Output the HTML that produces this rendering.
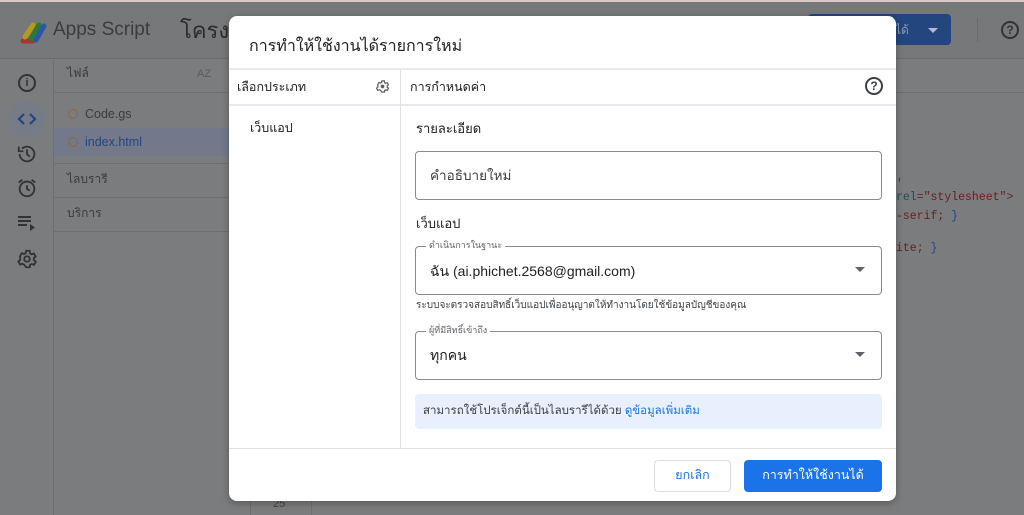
<!DOCTYPE html>
<html><head><meta charset="utf-8"><style>
*{box-sizing:border-box;margin:0;padding:0}
body{width:1024px;height:515px;overflow:hidden;position:relative;background:#7b7c7e;font-family:"Liberation Sans","Noto Sans CJK SC",sans-serif;color:#202124}
.a{position:absolute}
.bg{color:#3a3b3d}
.field{position:absolute;border:1px solid #8a8b8d;border-radius:4px;background:#fff}
.lbl{position:absolute;top:-9px;left:10px;background:#fff;padding:0 3px;font-size:9px;color:#5f6368}
.caret{position:absolute;right:16px;top:20px;width:0;height:0;border-left:5px solid transparent;border-right:5px solid transparent;border-top:5px solid #5f6368}
</style></head><body>
<div class="a" style="left:0;top:0;width:1024px;height:2px;background:#d9c9c9"></div>
<div class="a" style="left:0;top:2px;width:1024px;height:57px;background:#77787a;border-bottom:1px solid #6c6d6f"></div>
<svg class="a" style="left:19px;top:19px" width="30" height="26" viewBox="0 0 30 26">
<path d="M4 22 L14 22" stroke="#a33" stroke-width="5" stroke-linecap="round"/>
<path d="M6 18 L14 6" stroke="#b89a1a" stroke-width="5" stroke-linecap="round"/>
<path d="M12 20 L20 6" stroke="#2a7a3a" stroke-width="5" stroke-linecap="round"/>
<path d="M17 21 L25 7" stroke="#2b56a8" stroke-width="5" stroke-linecap="round"/>
</svg>
<div class="a bg" style="left:53px;top:19px;font-size:19px;color:#3b3c3e">Apps Script</div>
<div class="a bg" style="left:180px;top:13px;font-size:22px;color:#2a2b2d">โครงก</div>
<div class="a" style="left:808px;top:14px;width:143px;height:31px;background:#23467f;border-radius:4px"></div>
<div class="a" style="left:895px;top:21px;font-size:12px;color:#8a9bbd">ได้</div>
<div class="a" style="left:928px;top:28px;border-left:5px solid transparent;border-right:5px solid transparent;border-top:5px solid #b0bcd3"></div>
<div class="a" style="left:977px;top:18px;width:1px;height:24px;background:#6a6b6d"></div>
<div class="a" style="left:1001px;top:21px;width:18px;height:18px;border:2px solid #333;border-radius:50%;font-size:12px;text-align:center;line-height:14px;color:#333;font-weight:bold">?</div>
<div class="a" style="left:53px;top:60px;width:1px;height:455px;background:#6e6f71"></div>
<div class="a" style="left:18px;top:74px;width:18px;height:18px;border:2px solid #333;border-radius:50%;font-size:11px;text-align:center;line-height:14px;color:#333;font-weight:bold">i</div>
<div class="a" style="left:9px;top:101px;width:36px;height:36px;border-radius:50%;background:#757c88"></div>
<svg class="a" style="left:17px;top:111px" width="20" height="16" viewBox="0 0 20 16"><path d="M7 3 L2 8 L7 13 M13 3 L18 8 L13 13" stroke="#23467f" stroke-width="2.2" fill="none"/></svg>
<svg class="a" style="left:16px;top:143px" width="22" height="22" viewBox="0 0 24 24"><path d="M4 12a8 8 0 1 0 2.5-5.8" stroke="#333" stroke-width="2" fill="none"/><path d="M3 4v5h5" stroke="#333" stroke-width="2" fill="none"/><path d="M12 7v5l3 3" stroke="#333" stroke-width="2" fill="none"/></svg>
<svg class="a" style="left:16px;top:177px" width="22" height="22" viewBox="0 0 24 24"><circle cx="12" cy="13" r="8" stroke="#333" stroke-width="2" fill="none"/><path d="M12 9v4l3 2M3 6l4-3M21 6l-4-3" stroke="#333" stroke-width="2" fill="none"/></svg>
<svg class="a" style="left:17px;top:215px" width="20" height="16" viewBox="0 0 20 16"><path d="M1 2h13M1 6h13M1 10h9" stroke="#333" stroke-width="2"/><path d="M13 9l5 3.5-5 3.5z" fill="#333"/></svg>
<svg class="a" style="left:16px;top:248px" width="22" height="22" viewBox="0 0 24 24"><path fill="none" stroke="#333" stroke-width="2" d="M19.4 13a7.5 7.5 0 000-2l2.1-1.6-2-3.5-2.5 1a7 7 0 00-1.7-1L15 3h-4l-.4 2.6a7 7 0 00-1.7 1l-2.5-1-2 3.5L4.6 11a7.5 7.5 0 000 2l-2.1 1.6 2 3.5 2.5-1a7 7 0 001.7 1L11 21h4l.4-2.6a7 7 0 001.7-1l2.5 1 2-3.5z"/><circle cx="12" cy="12" r="3" fill="none" stroke="#333" stroke-width="2"/></svg>
<div class="a" style="left:54px;top:92px;width:175px;height:1px;background:#6e6f71"></div>
<div class="a bg" style="left:67px;top:64px;font-size:12px">ไฟล์</div>
<div class="a" style="left:197px;top:68px;font-size:11px;color:#5a5b5d">AZ</div>
<div class="a" style="left:68px;top:109px;width:10px;height:10px;border:1.5px solid #8a6a35;border-radius:50%"></div>
<div class="a bg" style="left:85px;top:107px;font-size:12.5px">Code.gs</div>
<div class="a" style="left:54px;top:128px;width:175px;height:28px;background:#73798a"></div>
<div class="a" style="left:68px;top:137px;width:10px;height:10px;border:1.5px solid #8a6a35;border-radius:50%"></div>
<div class="a" style="left:85px;top:135px;font-size:12.5px;color:#23467f">index.html</div>
<div class="a" style="left:54px;top:163px;width:175px;height:1px;background:#6e6f71"></div>
<div class="a bg" style="left:67px;top:170px;font-size:12px">ไลบรารี</div>
<div class="a" style="left:54px;top:197px;width:175px;height:1px;background:#6e6f71"></div>
<div class="a bg" style="left:67px;top:204px;font-size:12px">บริการ</div>
<div class="a" style="left:54px;top:231px;width:175px;height:1px;background:#6e6f71"></div>
<div class="a" style="left:895px;top:92px;width:129px;height:1px;background:#6e6f71"></div>
<div class="a" style="left:896px;top:178px;font-family:'Liberation Mono',monospace;font-size:11.5px;color:#5a2a2a">' <span style="color:#1f4f52">rel</span>=<span style="color:#6b1d1d">"stylesheet"</span>&gt;</div>
<div class="a" style="left:896px;top:210px;font-family:'Liberation Mono',monospace;font-size:11.5px;color:#6b1d1d">-serif; <span style="color:#23467f">}</span></div>
<div class="a" style="left:896px;top:242px;font-family:'Liberation Mono',monospace;font-size:11.5px;color:#6b1d1d">ite; <span style="color:#23467f">}</span></div>
<div class="a" style="left:250px;top:500px;width:1px;height:15px;background:#6e6f71"></div>
<div class="a" style="left:311px;top:500px;width:1px;height:15px;background:#6e6f71"></div>
<div class="a" style="left:273px;top:498px;font-size:11px;color:#444">25</div>
<div class="a" style="left:229px;top:16px;width:667px;height:485px;background:#fff;border-radius:8px;box-shadow:0 2px 8px rgba(0,0,0,.3)">
 <div class="a" style="left:20px;top:18px;font-size:16px;color:#202124">การทำให้ใช้งานได้รายการใหม่</div>
 <div class="a" style="left:0;top:52px;width:667px;height:2px;background:#e8eaed"></div>
 <div class="a" style="left:0;top:88px;width:667px;height:2px;background:#e8eaed"></div>
 <div class="a" style="left:171px;top:54px;width:1px;height:378px;background:#e0e0e0"></div>
 <div class="a" style="left:8px;top:61px;font-size:12.5px">เลือกประเภท</div>
 <svg class="a" style="left:146px;top:63px" width="15" height="15" viewBox="0 0 24 24"><path fill="none" stroke="#5f6368" stroke-width="2" d="M19.4 13a7.5 7.5 0 000-2l2.1-1.6-2-3.5-2.5 1a7 7 0 00-1.7-1L15 3h-4l-.4 2.6a7 7 0 00-1.7 1l-2.5-1-2 3.5L4.6 11a7.5 7.5 0 000 2l-2.1 1.6 2 3.5 2.5-1a7 7 0 001.7 1L11 21h4l.4-2.6a7 7 0 001.7-1l2.5 1 2-3.5z"/><circle cx="12" cy="12" r="3" fill="#5f6368"/></svg>
 <div class="a" style="left:181px;top:61px;font-size:12.5px">การกำหนดค่า</div>
 <div class="a" style="left:636px;top:61px;width:18px;height:18px;border:2px solid #3c4043;border-radius:50%;font-size:12px;text-align:center;line-height:14px;color:#3c4043;font-weight:bold">?</div>
 <div class="a" style="left:21px;top:102px;font-size:12.5px">เว็บแอป</div>
 <div class="a" style="left:187px;top:102px;font-size:13px">รายละเอียด</div>
 <div class="field" style="left:186px;top:135px;width:467px;height:49px"><div class="a" style="left:14px;top:12px;font-size:13.5px;color:#3c4043">คำอธิบายใหม่</div></div>
 <div class="a" style="left:187px;top:197px;font-size:13px">เว็บแอป</div>
 <div class="field" style="left:186px;top:230px;width:467px;height:49px"><div class="lbl">ดำเนินการในฐานะ</div><div class="a" style="left:14px;top:14px;font-size:14px">ฉัน (ai.phichet.2568@gmail.com)</div><div class="caret"></div></div>
 <div class="a" style="left:187px;top:282px;font-size:10px;color:#3c4043">ระบบจะตรวจสอบสิทธิ์เว็บแอปเพื่ออนุญาตให้ทำงานโดยใช้ข้อมูลบัญชีของคุณ</div>
 <div class="field" style="left:186px;top:315px;width:467px;height:49px"><div class="lbl">ผู้ที่มีสิทธิ์เข้าถึง</div><div class="a" style="left:14px;top:13px;font-size:14px">ทุกคน</div><div class="caret"></div></div>
 <div class="a" style="left:186px;top:378px;width:467px;height:35px;background:#e8f0fe;border-radius:4px"><div class="a" style="left:8px;top:8px;font-size:11.5px;color:#3c4043">สามารถใช้โปรเจ็กต์นี้เป็นไลบรารีได้ด้วย <span style="color:#1a73e8">ดูข้อมูลเพิ่มเติม</span></div></div>
 <div class="a" style="left:0;top:432px;width:667px;height:1px;background:#e0e0e0"></div>
 <div class="a" style="left:425px;top:444px;width:77px;height:32px;border:1px solid #dadce0;border-radius:4px;text-align:center;line-height:28px;font-size:12.5px;color:#1a73e8">ยกเลิก</div>
 <div class="a" style="left:515px;top:444px;width:138px;height:32px;background:#1a73e8;border-radius:4px;text-align:center;line-height:30px;font-size:12.5px;color:#fff">การทำให้ใช้งานได้</div>
</div>
</body></html>
